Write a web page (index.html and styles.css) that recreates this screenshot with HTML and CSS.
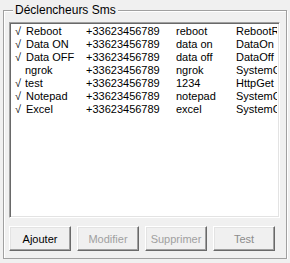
FILE: index.html
```html
<!DOCTYPE html>
<html lang="fr">
<head>
  <meta charset="UTF-8">
  <title>Déclencheurs Sms</title>
  <link rel="stylesheet" href="styles.css">
</head>
<body>
  <div class="group">
    <span class="group-title">Déclencheurs Sms</span>
    <div class="list">
      <div class="row"><span>√</span><span>Reboot</span><span>+33623456789</span><span>reboot</span><span>RebootRequest</span></div>
      <div class="row"><span>√</span><span>Data ON</span><span>+33623456789</span><span>data on</span><span>DataOn</span></div>
      <div class="row"><span>√</span><span>Data OFF</span><span>+33623456789</span><span>data off</span><span>DataOff</span></div>
      <div class="row"><span></span><span class="nocheck">ngrok</span><span>+33623456789</span><span>ngrok</span><span>SystemCommand</span></div>
      <div class="row"><span>√</span><span class="nocheck">test</span><span>+33623456789</span><span>1234</span><span>HttpGet</span></div>
      <div class="row"><span>√</span><span>Notepad</span><span>+33623456789</span><span>notepad</span><span>SystemCommand</span></div>
      <div class="row"><span>√</span><span>Excel</span><span>+33623456789</span><span>excel</span><span>SystemCommand</span></div>
    </div>
    <div class="buttons">
      <button class="btn">Ajouter</button>
      <button class="btn" disabled>Modifier</button>
      <button class="btn" disabled>Supprimer</button>
      <button class="btn btn-test" disabled>Test</button>
    </div>
  </div>
</body>
</html>
```

FILE: styles.css
```css
html, body{
  margin: 0;
  background: #f0f0f0;
  font-family: "Liberation Sans", Arial, sans-serif;
  font-size: 11px;
  color: #000;
}
body{
  padding: 10px 3px 0 3px;
  width: 284px;
}
.group{
  position: relative;
  height: 249px;
  border: 1px solid #a0a0a0;
  box-shadow: inset 1px 1px #fff, 1px 1px #fff;
  padding: 11px 6px 0 5px;
  box-sizing: border-box;
}
.group-title{
  position: absolute;
  top: -8px;
  left: 9px;
  padding: 0 2px;
  background: #f0f0f0;
  font-size: 12px;
  line-height: 14px;
}
.list{
  height: 196px;
  background: #fff;
  border: 1px solid;
  border-color: #a0a0a0 #fff #fff #a0a0a0;
  box-shadow: inset 1px 1px #696969, inset -1px -1px #e3e3e3;
  padding: 2px 2px 0 4px;
  box-sizing: border-box;
  overflow: hidden;
}
.row{
  display: grid;
  grid-template-columns: 12px 60px 90px 60px 41px;
  height: 13px;
  line-height: 13px;
  white-space: nowrap;
}
.row span{
  overflow: hidden;
}
.row span:first-child{
  padding-left: 1px;
}
.nocheck{
  margin-left: -1px;
}
.buttons{
  display: flex;
  gap: 6px;
  margin-top: 8px;
  padding-left: 0;
}
.btn{
  width: 62px;
  height: 25px;
  padding: 0;
  background: #f0f0f0;
  font-family: "Liberation Sans", Arial, sans-serif;
  font-size: 11px;
  color: #000;
  border: 1px solid;
  border-color: #fff #696969 #696969 #fff;
  box-shadow: inset -1px -1px #a0a0a0, inset 1px 1px #e3e3e3;
}
.btn:disabled{
  color: #a0a0a0;
}
.btn-test:disabled{
  color: #8c8c8c;
}
```
